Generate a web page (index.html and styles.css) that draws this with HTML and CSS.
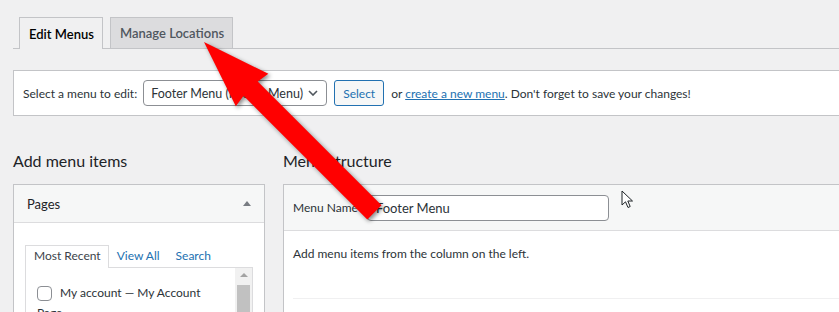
FILE: index.html
```html
<!DOCTYPE html>
<html lang="en">
<head>
    <meta charset="UTF-8">
    <title>Menus</title>
    <link rel="stylesheet" href="styles.css">
</head>
<body>
    <div class="wrap">
        <nav class="tabs">
            <a class="tab active">Edit Menus</a>
            <a class="tab">Manage Locations</a>
        </nav>

        <div class="manage-menus">
            <span class="label">Select a menu to edit:</span>
            <div class="select">
                <span>Footer Menu (Footer Menu)</span>
                <svg class="chevron" width="10" height="6" viewBox="0 0 10 6"><polyline points="1,1 5,5 9,1" fill="none" stroke="#50575e" stroke-width="1.6"/></svg>
            </div>
            <button class="button">Select</button>
            <span class="note">or <a href="#">create a new menu</a>. Don't forget to save your changes!</span>
        </div>

        <div class="columns">
            <div class="col-left">
                <h2>Add menu items</h2>
                <div class="box">
                    <div class="box-head">
                        <span>Pages</span>
                        <span class="toggle"></span>
                    </div>
                    <div class="box-body">
                        <div class="subtabs">
                            <span class="subtab active">Most Recent</span>
                            <span class="subtab">View All</span>
                            <span class="subtab">Search</span>
                        </div>
                        <div class="list">
                            <div class="items">
                                <div class="item"><span class="checkbox"></span>My account — My Account</div>
                                <div class="item-wrap">Page</div>
                            </div>
                            <div class="scrollbar">
                                <span class="scroll-up"></span>
                                <span class="thumb"></span>
                            </div>
                        </div>
                    </div>
                </div>
            </div>

            <div class="col-right">
                <h2>Menu structure</h2>
                <div class="menu-box">
                    <div class="menu-head">
                        <label>Menu Name</label>
                        <div class="name-input">Footer Menu</div>
                    </div>
                    <div class="menu-body">
                        <p>Add menu items from the column on the left.</p>
                        <div class="divider"></div>
                    </div>
                </div>
            </div>
        </div>
    </div>

    <!-- annotation arrow drawn over the screenshot -->
    <svg class="arrow" width="839" height="312" viewBox="0 0 839 312">
        <g transform="translate(204 42) rotate(45)">
            <polygon points="0,0 68,-23 66,-10 241,-10 241,10 66,10 68,23" fill="#ff0000"/>
        </g>
    </svg>

    <svg class="cursor" width="13" height="19" viewBox="0 0 13 19">
        <path d="M1,1 L1,15 L4.5,11.8 L7,17.5 L9.2,16.5 L6.8,11 L11.5,11 Z" fill="#fff" stroke="#1d2327" stroke-width="1" stroke-linejoin="round"/>
    </svg>
</body>
</html>
```

FILE: styles.css
```css
html, body {
    margin: 0;
    overflow: hidden;
}
body {
    font-family: "Segoe UI", Lato, "Noto Sans", sans-serif;
    font-size: 12px;
    color: #3c434a;
    background: #f0f0f1;
    width: 839px;
    height: 312px;
    position: relative;
}
.wrap {
    padding-left: 13px;
    width: 1000px;
}
.tabs {
    display: flex;
    gap: 7px;
    padding: 17px 0 0 6px;
    border-bottom: 1px solid #c3c4c7;
    height: 31px;
    box-sizing: content-box;
}
.tab {
    display: flex;
    align-items: center;
    padding: 0 8px 0 9px;
    height: 30px;
    border: 1px solid #c3c4c7;
    border-bottom: none;
    background: #dcdcde;
    color: #50575e;
    font-size: 13px;
    font-weight: 600;
    white-space: nowrap;
}
.tab.active {
    background: #f0f0f1;
    color: #000;
    height: 31px;
    margin-bottom: -1px;
}
.manage-menus {
    margin-top: 21px;
    height: 44px;
    display: flex;
    align-items: center;
    padding-left: 9px;
    background: #fff;
    border: 1px solid #c3c4c7;
    color: #2c3338;
    white-space: nowrap;
}
.manage-menus .label {
    margin-right: 6px;
}
.select {
    display: flex;
    align-items: center;
    justify-content: space-between;
    padding: 0 8px 0 7px;
    box-sizing: border-box;
    width: 184px;
    height: 26px;
    border: 1px solid #8c8f94;
    border-radius: 4px;
    font-size: 12.5px;
    color: #2c3338;
}
.button {
    margin-left: 7px;
    width: 50px;
    height: 26px;
    border: 1px solid #2271b1;
    border-radius: 3px;
    background: #f6f7f7;
    color: #2271b1;
    font: inherit;
    padding: 0;
}
.note {
    margin-left: 7px;
}
.note a {
    color: #2271b1;
}
.columns {
    display: flex;
    gap: 18px;
}
h2 {
    margin: 33px 0 12px;
    font-size: 16px;
    font-weight: 400;
    color: #1d2327;
    line-height: 23px;
}
.col-left {
    width: 252px;
}
.col-right {
    flex: 1;
}
.box {
    border: 1px solid #c3c4c7;
    background: #fff;
    height: 200px;
}
.box-head {
    height: 37px;
    display: flex;
    align-items: center;
    justify-content: space-between;
    padding: 0 13px;
    background: #f6f7f7;
    border-bottom: 1px solid #dcdcde;
    font-size: 13px;
    color: #1d2327;
}
.toggle {
    width: 0;
    height: 0;
    border-left: 4px solid transparent;
    border-right: 4px solid transparent;
    border-bottom: 5px solid #787c82;
}
.box-body {
    padding: 21px 11px 0;
}
.subtabs {
    display: flex;
    height: 23px;
    align-items: flex-end;
}
.subtab {
    padding: 0 8px 1px;
    color: #2271b1;
    line-height: 20px;
}
.subtab.active {
    color: #3c434a;
    border: 1px solid #dcdcde;
    border-bottom: none;
    padding: 0 7px 2px 8px;
    background: #fff;
    margin-bottom: -1px;
    position: relative;
}
.list {
    display: flex;
    border: 1px solid #dcdcde;
    height: 60px;
}
.items {
    flex: 1;
    padding: 15px 11px 0;
    color: #2c3338;
}
.item {
    display: flex;
    align-items: center;
    gap: 8px;
    line-height: 20px;
}
.item-wrap {
    line-height: 20px;
}
.checkbox {
    border: 1px solid #8c8f94;
    border-radius: 4px;
    box-sizing: border-box;
    width: 15px;
    height: 15px;
}
.scrollbar {
    width: 17px;
    background: #f1f1f1;
    display: flex;
    flex-direction: column;
    align-items: center;
}
.scroll-up {
    margin-top: 5px;
    width: 0;
    height: 0;
    border-left: 4px solid transparent;
    border-right: 4px solid transparent;
    border-bottom: 4px solid #a3a3a3;
}
.thumb {
    margin-top: 8px;
    width: 13px;
    flex: 1;
    background: #c1c1c1;
}
.menu-box {
    border: 1px solid #c3c4c7;
    background: #fff;
    height: 200px;
}
.menu-head {
    height: 45px;
    display: flex;
    align-items: center;
    padding-left: 9px;
    background: #f6f7f7;
    border-bottom: 1px solid #dcdcde;
    color: #2c3338;
}
.menu-head label {
    margin-right: 9px;
}
.name-input {
    width: 242px;
    height: 26px;
    box-sizing: border-box;
    border: 1px solid #8c8f94;
    border-radius: 4px;
    background: #fff;
    font-size: 13px;
    color: #2c3338;
    padding: 0 8px;
    line-height: 24px;
}
.menu-body {
    padding: 0 0 0 9px;
    color: #2c3338;
}
.menu-body p {
    margin: 0;
    padding-top: 13px;
    line-height: 20px;
}
.divider {
    margin-top: 34px;
    border-top: 1px solid #f0f0f1;
}
.arrow {
    position: absolute;
    top: 0;
    left: 0;
    filter: drop-shadow(2px 2px 2px rgba(0, 0, 0, 0.45));
}
.cursor {
    position: absolute;
    left: 621px;
    top: 190px;
}
```
